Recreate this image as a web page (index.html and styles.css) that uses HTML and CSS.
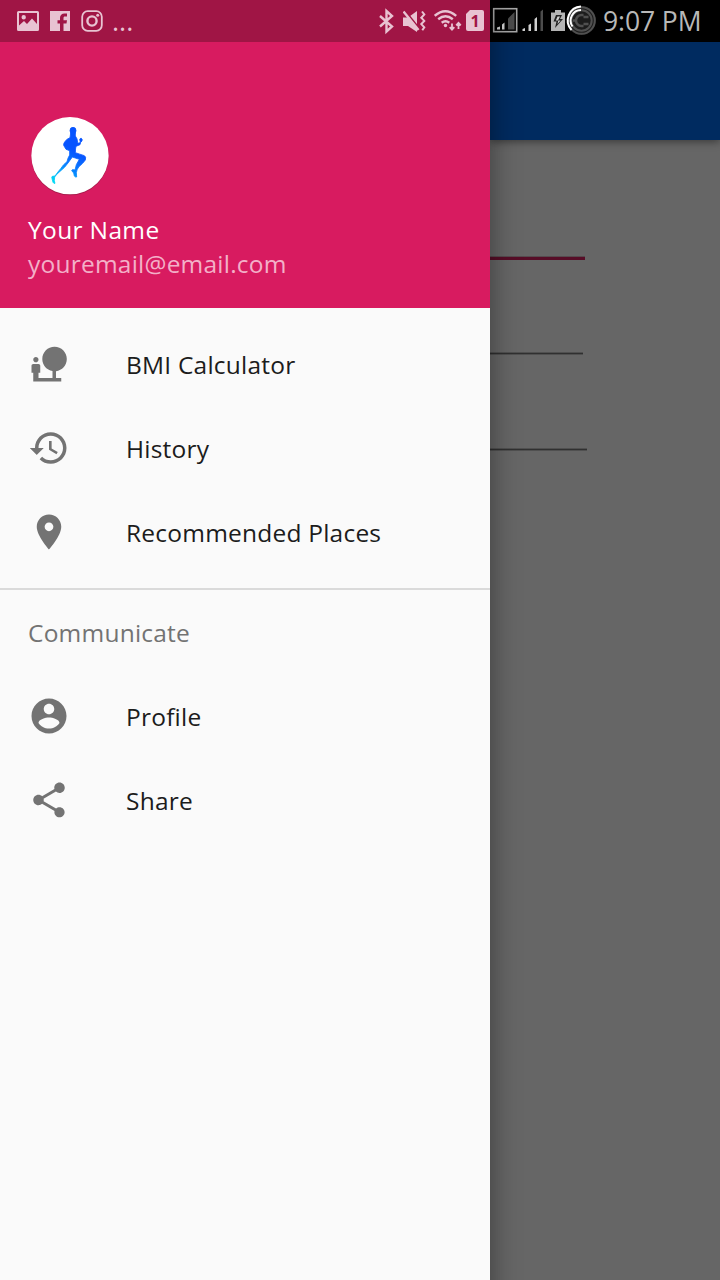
FILE: index.html
```html
<!DOCTYPE html>
<html lang="en">
<head>
<meta charset="utf-8">
<title>BMI Calculator</title>
<link rel="stylesheet" href="styles.css">
</head>
<body>
<div class="screen">
  <aside class="drawer">
    <div class="status status-drawer">
      <svg class="s-image" width="22" height="42" viewBox="17 0 22 42"><path fill-rule="evenodd" d="M18.500 11h19a1.500 1.500 0 0 1 1.500 1.500v17a1.500 1.500 0 0 1-1.500 1.500h-19a1.500 1.500 0 0 1-1.500-1.500v-17a1.500 1.500 0 0 1 1.500-1.500zM19 13v12.500l5-4.500 3 3 5-5.500 5 5.500V13zM23.700 15a2.200 2.200 0 1 1 0 4.400 2.200 2.200 0 0 1 0-4.400z"/></svg>
      <svg class="s-facebook" width="20" height="42" viewBox="50 0 20 42"><path d="M50 11h20v20h-3.500V31h-3v-7.500h3l.5-3.200h-3.500v-2.100c0-1.100.3-1.700 1.500-1.700h2v-3h-2.500c-2.700 0-4.500 1.600-4.500 4.500v2.300h-2.500v3.200H60V31H50z"/></svg>
      <svg class="s-instagram" width="22" height="42" viewBox="81 0 22 42"><rect class="line slim" x="82.200" y="11.200" width="19.600" height="19.600" rx="5.500"/><circle class="line" cx="92" cy="21" r="4.600"/><circle cx="97.700" cy="15.300" r="1.500"/></svg>
      <span class="more">...</span>
      <svg class="s-bluetooth" width="16" height="42" viewBox="379 0 16 42"><path class="line" d="M380 16l12 10.500-5.500 5V11l5.500 5-12 10.500"/></svg>
      <svg class="s-mute" width="24" height="42" viewBox="403 0 24 42"><path d="M403 17.500h5l9-6.500v21l-9-6h-5z"/><path class="cut" d="M404.500 10l14 17.500"/><path class="line" d="M403.500 11.500l15 18.500"/><path class="line thin" d="M422 11.500l2.300 3-3 3.200 3 3.200-3 3.200 3 3.200-2 3"/></svg>
      <svg class="s-wifi" width="28" height="42" viewBox="434 0 28 42"><path class="line" d="M434.700 15.800q10.500-9.300 21.500 0M438.200 19.300q7.300-6 14.600 0M441.700 22.700q3.800-3 7.600 0"/><circle cx="445.500" cy="25.500" r="1.700"/><path class="line slim" d="M452 23.500v6M449.700 27.200l2.300 2.500 2.300-2.500M458.500 29v-6M456.200 25.300l2.300-2.500 2.300 2.500"/></svg>
      <span class="sim">1</span>
    </div>
    <header class="profile">
      <svg class="avatar" width="84" height="84" viewBox="24 24 252 252">
        <defs><linearGradient id="run" gradientUnits="userSpaceOnUse" x1="180" y1="90" x2="95" y2="225"><stop offset=".3" stop-color="#0754ff"/><stop offset=".6" stop-color="#087cff"/><stop offset="1" stop-color="#00d8f5"/></linearGradient></defs>
        <circle class="avatar-shade" cx="150" cy="155" r="116"/>
        <circle class="avatar-disc" cx="150" cy="152" r="116"/>
        <g class="runner" fill="url(#run)" stroke="url(#run)">
          <ellipse cx="159" cy="77" rx="9" ry="10"/>
          <path d="M152 84h14v9q6 6 7 20l4 2 4-4-2-8q2-4 5-3 4 2 2 8l-4 4-2 7-12 5q-2 7-2 19 12 4 27 9 6 3 3 13-6 9-20 21-6 8-7 17l1 13q-5 1-7-3l-2-9-6-7q1-4 6-3l4 1 4-16 9-16-21-7-13 18q-9 14-25 26-10 8-15 16l-1 11 2 8q-4 1-6-3l-3-11q-2-6 1-7l8-1q8-12 17-22 8-13 19-21 2-11 8-20v-13l-11-4-7-12q-1-5 3-10 5-9 16-13z"/>
        </g>
      </svg>
      <div class="name">Your Name</div>
      <div class="email">youremail@email.com</div>
    </header>
    <nav class="menu">
      <a class="item"><svg class="icon" viewBox="0 0 24 24"><path d="M22.170 9.170c0-3.870-3.130-7-7-7s-7 3.130-7 7c0 3.470 2.520 6.340 5.830 6.890V20H6v-3h1v-4c0-.55-.45-1-1-1H3c-.55 0-1 .45-1 1v4h1v5h16v-2h-3v-3.880c3.470-.41 6.170-3.360 6.170-6.950zM4.500 11c.83 0 1.500-.67 1.500-1.500S5.330 8 4.500 8 3 8.670 3 9.500 3.670 11 4.500 11z"/></svg><span>BMI Calculator</span></a>
      <a class="item"><svg class="icon" viewBox="0 0 24 24"><path d="M13 3c-4.970 0-9 4.030-9 9H1l3.890 3.890.07.14L9 12H6c0-3.870 3.130-7 7-7s7 3.130 7 7-3.130 7-7 7c-1.930 0-3.680-.79-4.940-2.060l-1.420 1.420C8.270 19.990 10.510 21 13 21c4.970 0 9-4.030 9-9s-4.030-9-9-9zm-1 5v5l4.280 2.540.72-1.210-3.500-2.080V8H12z"/></svg><span>History</span></a>
      <a class="item"><svg class="icon" viewBox="0 0 24 24"><path d="M12 2C8.130 2 5 5.130 5 9c0 5.250 7 13 7 13s7-7.750 7-13c0-3.870-3.130-7-7-7zm0 9.500c-1.380 0-2.500-1.120-2.500-2.500s1.120-2.500 2.500-2.500 2.500 1.120 2.500 2.500-1.120 2.500-2.500 2.500z"/></svg><span>Recommended Places</span></a>
    </nav>
    <nav class="group">
      <div class="subheader">Communicate</div>
      <a class="item"><svg class="icon" viewBox="0 0 24 24"><path d="M12 2C6.480 2 2 6.480 2 12s4.480 10 10 10 10-4.480 10-10S17.520 2 12 2zm0 3c1.660 0 3 1.340 3 3s-1.340 3-3 3-3-1.340-3-3 1.340-3 3-3zm0 14.200c-2.500 0-4.710-1.280-6-3.220.03-1.990 4-3.080 6-3.080 1.990 0 5.970 1.090 6 3.080-1.290 1.940-3.500 3.220-6 3.220z"/></svg><span>Profile</span></a>
      <a class="item"><svg class="icon" viewBox="0 0 24 24"><path d="M18 16.080c-.76 0-1.440.3-1.960.77L8.910 12.700c.05-.23.09-.46.09-.7s-.04-.47-.09-.7l7.050-4.110c.54.5 1.250.81 2.040.81 1.660 0 3-1.340 3-3s-1.340-3-3-3-3 1.340-3 3c0 .24.04.47.09.7L8.040 9.810C7.500 9.310 6.790 9 6 9c-1.660 0-3 1.340-3 3s1.340 3 3 3c.79 0 1.500-.31 2.040-.81l7.120 4.160c-.05.21-.08.43-.08.65 0 1.610 1.310 2.920 2.920 2.920s2.920-1.310 2.920-2.920-1.310-2.920-2.920-2.920z"/></svg><span>Share</span></a>
    </nav>
  </aside>
  <main class="page">
    <div class="status status-page">
      <svg class="s-signal" width="26" height="42" viewBox="492 0 26 42"><rect class="frame" x="493.700" y="8.700" width="23" height="23"/><path d="M497 29.500v-2l3-1v3zM502 29.500v-5l2.500-2v7z"/><path class="dim" d="M508 29.500V18.500l6.500-6.500v17.500z"/></svg>
      <svg class="s-signal2" width="23" height="42" viewBox="522 0 23 42"><path d="M522.500 31v-2l2.500-1v3zM528.500 31v-6l2.500-1.500V31zM534.500 31V19l2.500-2V31z"/><path class="dim" d="M540.500 31V11.500l2.500-2V31z"/></svg>
      <svg class="s-battery" width="46" height="42" viewBox="551 0 46 42"><path d="M555 10h6v2.500h4V31h-14V12.500h4z"/><path class="bolt" d="M556 15h6l-2 4h3l-8 9 1.500-6.500h-3z"/><path class="bolt-core" d="M557.500 16.500h2.500l-2 4h2.500l-3 3.500.8-3.500h-2.500z"/><circle class="ring-bg" cx="581.500" cy="20.500" r="14.500"/><circle class="ring" cx="581.500" cy="20.500" r="13.300"/><circle class="ring" cx="581.500" cy="20.500" r="10.200"/><path class="arc" d="M581 6.500a14 14 0 0 0-9.500 23.500M581 10a10.500 10.500 0 0 0-8.500 16.500"/><path class="plug" d="M573 20.500h4m11.500-3.500h-5m5 7h-5M583.500 15h-2a5.500 5.500 0 0 0 0 11h2"/></svg>
      <time class="clock">9:07 PM</time>
    </div>
    <div class="toolbar"></div>
    <div class="form">
      <div class="field focused"></div>
      <div class="field second"></div>
      <div class="field third"></div>
    </div>
  </main>
</div>
</body>
</html>
```
FILE: styles.css
```css
* { box-sizing: border-box; }
body {
  margin: 0;
  font-family: "Open Sans", "Noto Sans", sans-serif;
  font-size: 24.5px;
  font-kerning: none;
  letter-spacing: .22px;
}
.screen {
  display: grid;
  grid-template-columns: 490px 230px;
  width: 720px;
  height: 1280px;
  overflow: hidden;
}
.drawer {
  position: relative;
  z-index: 1;
  height: 1320px;
  background: #fafafa;
  color: #1c1c1c;
  box-shadow: 0 0 28px rgba(0, 0, 0, .42);
}
.status { display: flex; height: 42px; letter-spacing: 0; }
.status svg { flex: none; }
.status-drawer {
  background: #a01545;
  color: #e8c3d2;
  fill: #e8c3d2;
  padding-left: 17px;
}
.line { fill: none; stroke: #e8c3d2; stroke-width: 2.4; }
.thin { stroke-width: 2; }
.slim { stroke-width: 1.8; }
.cut { fill: none; stroke: #a01545; stroke-width: 2; }
.s-facebook { margin-left: 11px; }
.s-instagram { margin-left: 11px; }
.more { width: 32px; margin-left: 9px; font-size: 27px; line-height: 42px; }
.s-bluetooth { margin-left: 235px; }
.s-mute { margin-left: 8px; }
.s-wifi { margin-left: 7px; }
.sim {
  width: 18px;
  height: 21px;
  margin: 10px 0 0 4px;
  background: #e8c3d2;
  color: #a01545;
  border-radius: 2px;
  clip-path: polygon(4px 0, 100% 0, 100% 100%, 0 100%, 0 4px);
  font-size: 16px;
  font-weight: 700;
  line-height: 22px;
  text-align: center;
}
.profile {
  height: 266px;
  padding: 71px 28px 0;
  background: #d81b60;
  color: #fff;
}
.avatar { display: block; }
.avatar-disc { fill: #fff; }
.avatar-shade { fill: #a91b4b; }
.runner { stroke-width: 2.5; stroke-linejoin: round; }
.name { margin-top: 16px; line-height: 34px; letter-spacing: .35px; }
.email { line-height: 34px; color: #f3b0c8; }
.menu { padding: 14px 0; border-bottom: 2px solid #dadada; }
.item { display: flex; align-items: center; height: 84px; padding-left: 28px; }
.icon { width: 42px; height: 42px; margin-right: 56px; fill: #737373; }
.item span { line-height: 34px; padding-top: 1px; }
.subheader { height: 84px; padding-left: 28px; line-height: 86px; color: #737373; }
.page { background: #666; }
.status-page { background: #000; fill: #d0d0d0; padding-left: 2px; }
.frame { fill: none; stroke: #a8a8a8; stroke-width: 1.6; }
.dim { fill: #4c4c4c; }
.s-signal2 { margin-left: 4px; }
.s-battery { margin-left: 6px; }
.s-battery > path:first-child { fill: #b4b4b4; }
.s-battery .bolt { fill: #222; }
.s-battery .bolt-core { fill: #d0d0d0; }
.ring-bg { fill: #1c1c1c; }
.ring { fill: none; stroke: #505050; stroke-width: 2; }
.arc { fill: none; stroke: #fff; stroke-width: 2; }
.plug { fill: none; stroke: #505050; stroke-width: 2.5; }
.clock { margin-left: 6px; color: #b8b8b8; font-size: 26.5px; line-height: 43px; letter-spacing: -.1px; white-space: nowrap; }
.toolbar { height: 98px; background: #002b60; box-shadow: 0 2px 8px rgba(0, 0, 0, .42); }
.form { padding-top: 116px; }
.field { height: 4px; }
.focused { width: 95px; background: #570d27; border-top: 1px solid #574b4f; }
.second { width: 93px; height: 3px; margin-top: 92px; background: #303030; border: solid #505050; border-width: 1px 0; }
.third { width: 97px; height: 3px; margin-top: 93px; background: #303030; border: solid #505050; border-width: 1px 0; }
```
